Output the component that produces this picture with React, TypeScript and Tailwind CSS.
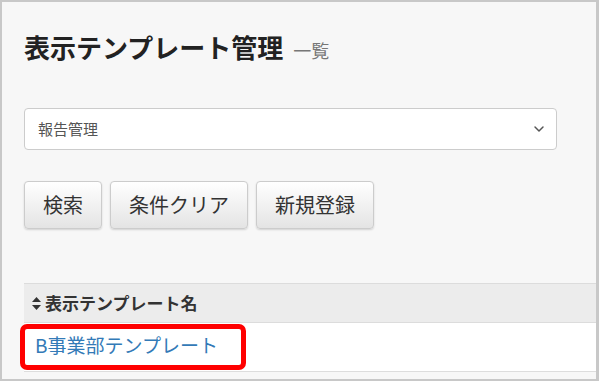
import { ChevronDown } from 'lucide-react';

const font = { fontFamily: '"Noto Sans CJK JP", "Noto Sans", sans-serif' };

function SortIcon() {
  return (
    <svg width="9" height="13" viewBox="0 0 9 13" className="fill-[#333]">
      <path d="M4.5 0 L9 5 H0 Z" />
      <path d="M0 8 H9 L4.5 13 Z" />
    </svg>
  );
}

export default function App() {
  const buttons = ['検索', '条件クリア', '新規登録'];

  return (
    <div
      className="w-[599px] h-[381px] overflow-hidden border-2 border-r-[3px] border-[#c8c8c8] bg-[#f7f7f7]"
      style={font}
    >
      <div className="pl-[22px] pt-[29px]">
        <div className="flex items-baseline gap-[10px]">
          <h1 className="text-[26px] font-bold leading-[31px] text-[#222]">表示テンプレート管理</h1>
          <span className="text-[18px] text-[#777]">一覧</span>
        </div>

        <div className="mt-[44px] w-[533px] h-[42px] rounded-[4px] border border-[#ccc] bg-white flex items-center justify-between pl-[13px] pr-[9px]">
          <span className="text-[15px] text-[#555]">報告管理</span>
          <ChevronDown size={16} strokeWidth={2.2} className="text-[#555]" />
        </div>

        <div className="mt-[31px] flex gap-[8px]">
          {buttons.map((b) => (
            <div
              key={b}
              className="h-[48px] px-[18px] flex items-center rounded-[4px] border border-[#ccc] bg-gradient-to-b from-white to-[#e4e4e4] shadow-[0_1px_2px_rgba(0,0,0,0.15)] text-[20px] text-[#333]"
            >
              {b}
            </div>
          ))}
        </div>

        <div className="mt-[54px] relative">
          <div className="h-[40px] border-t border-b border-[#dcdcdc] bg-[#ececec] flex items-center gap-[4px] pl-[8px]">
            <SortIcon />
            <span className="text-[17px] font-bold text-[#333]">表示テンプレート名</span>
          </div>
          <div className="h-[49px] bg-white border-b border-[#ddd] flex items-center pl-[11px]">
            <span className="text-[19px] text-[#337ab7] -mt-[4px]">B事業部テンプレート</span>
          </div>
          <div className="absolute left-[-4px] top-[41px] w-[226px] h-[46px] rounded-[7px] border-[5px] border-[#ff0000]" />
        </div>
      </div>
    </div>
  );
}
